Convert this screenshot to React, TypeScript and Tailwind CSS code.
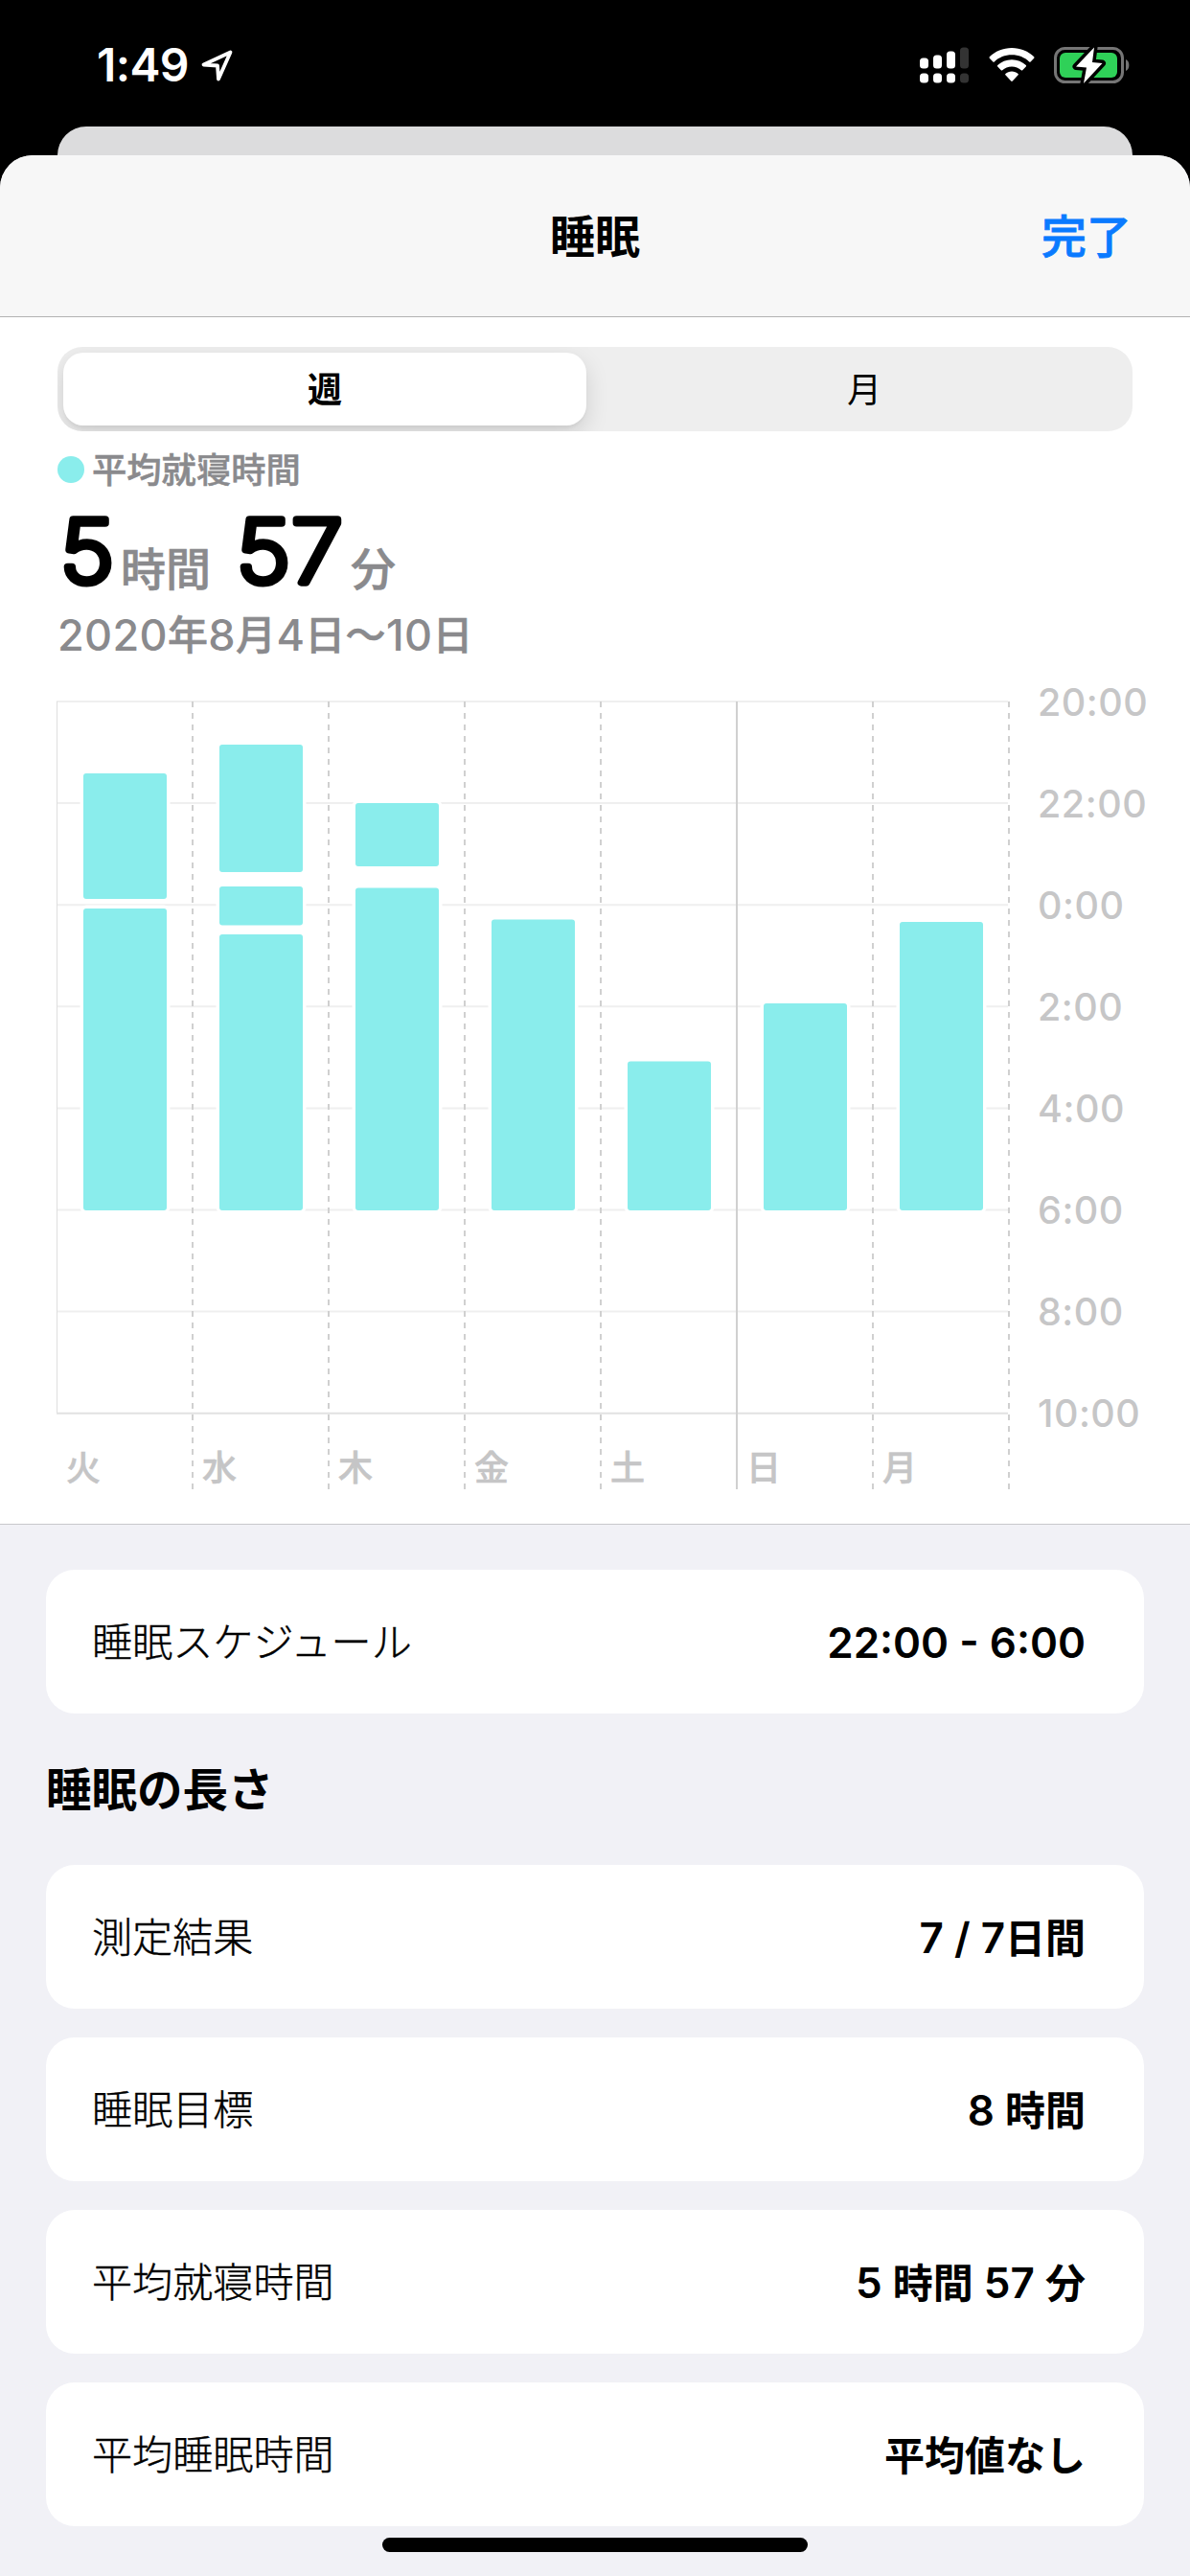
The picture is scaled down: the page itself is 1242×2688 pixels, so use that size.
import { useState } from 'react';
import clsx from 'clsx';

const HOURS = ['20:00', '22:00', '0:00', '2:00', '4:00', '6:00', '8:00', '10:00'];

interface DayColumn {
  label: string;
  bars: [number, number][];
}

// bar ranges are [top, bottom] in chart units
const DAYS: DayColumn[] = [
  { label: '火', bars: [[88, 219], [229, 544]] },
  { label: '水', bars: [[58, 191], [206, 246.5], [256, 544]] },
  { label: '木', bars: [[119, 185], [207.5, 544]] },
  { label: '金', bars: [[240.5, 544]] },
  { label: '土', bars: [[388.5, 544]] },
  { label: '日', bars: [[328, 544]] },
  { label: '月', bars: [[243, 544]] },
];

const LENGTH_ROWS = [
  { label: '測定結果', value: '7 / 7日間' },
  { label: '睡眠目標', value: '8 時間' },
  { label: '平均就寝時間', value: '5 時間 57 分' },
  { label: '平均睡眠時間', value: '平均値なし' },
];

const COL = 142;
const ROW = 106.1;

const LocationIcon = () => (
  <svg className="ml-3 h-9 w-9" viewBox="0 0 36 36" fill="none" stroke="#fff" strokeWidth="3.800" strokeLinejoin="round">
    <path d="M31.500 4.500 L3.500 17.500 L18 18.500 L19 32.500 Z" />
  </svg>
);

const SignalIcon = () => (
  <svg className="h-[38px] w-[52px]" viewBox="0 0 52 38" fill="#fff">
    <rect x="0" y="11.5" width="9" height="11" rx="3.5" />
    <rect x="14" y="8.5" width="9" height="14" rx="3.5" />
    <rect x="28" y="4.5" width="9" height="18" rx="3.5" />
    <rect x="42" y="0.5" width="9" height="22" rx="3.5" fill="#333" />
    <rect x="0" y="27.5" width="9" height="10" rx="3.5" />
    <rect x="14" y="27.5" width="9" height="10" rx="3.5" />
    <rect x="28" y="27.5" width="9" height="10" rx="3.5" />
    <rect x="42" y="27.5" width="9" height="10" rx="3.5" fill="#333" />
  </svg>
);

const WifiIcon = () => (
  <svg className="h-[38px] w-12" viewBox="0 0 48 38" fill="#fff">
    <path d="M24 1 C33 1 41.500 4.600 47.200 10.300 Q47.900 11 47.200 11.800 L43.600 15.400 Q42.900 16 42.200 15.400 C37.500 10.900 31 8.300 24 8.300 C17 8.300 10.500 10.900 5.800 15.400 Q5.100 16 4.400 15.400 L0.800 11.800 Q0.100 11 0.800 10.300 C6.500 4.600 15 1 24 1 Z" />
    <path d="M24 13.300 C29.800 13.300 35 15.500 38.800 19.100 Q39.500 19.900 38.800 20.600 L35.200 24.200 Q34.500 24.800 33.800 24.200 C31.200 21.900 27.800 20.500 24 20.500 C20.200 20.500 16.800 21.900 14.200 24.200 Q13.500 24.800 12.800 24.200 L9.200 20.600 Q8.500 19.900 9.200 19.100 C13 15.500 18.200 13.300 24 13.300 Z" />
    <path d="M24 25.500 C26.600 25.500 28.900 26.400 30.600 27.900 Q31.300 28.600 30.600 29.300 L24.800 35.600 Q24 36.300 23.200 35.600 L17.400 29.300 Q16.700 28.600 17.400 27.900 C19.100 26.400 21.400 25.500 24 25.500 Z" />
  </svg>
);

const BatteryIcon = () => (
  <svg className="h-10 w-20" viewBox="0 0 80 40">
    <rect x="1.500" y="2.500" width="70" height="35" rx="10" fill="none" stroke="#757575" strokeWidth="3" />
    <path d="M75 14 C79.500 15.500 79.500 24.500 75 26 Z" fill="#757575" />
    <rect x="6" y="7" width="60" height="26" rx="6" fill="#2fd158" />
    <path
      d="M42 1.500 L23 21.500 L34 22.500 L31 39 L50.500 18 L40 17 Z"
      fill="#fff"
      stroke="#000"
      strokeWidth="7"
      strokeLinejoin="round"
      paintOrder="stroke"
    />
  </svg>
);

const StatusBar = () => (
  <div className="flex h-[132px] items-start justify-between pl-[101px] pr-[62px] pt-[48px] text-white">
    <div className="flex h-10 items-center">
      <span className="text-[48px] font-semibold leading-10 tracking-[-0.6px]">1:49</span>
      <LocationIcon />
    </div>
    <div className="flex h-10 items-center">
      <SignalIcon />
      <div className="ml-5">
        <WifiIcon />
      </div>
      <div className="ml-5">
        <BatteryIcon />
      </div>
    </div>
  </div>
);

const SegmentedControl = () => {
  const [selected, setSelected] = useState('週');

  return (
    <div className="flex h-[88px] overflow-hidden rounded-[26px] bg-[#eeeeee] p-1.5 text-[36px]">
      {['週', '月'].map((item) => (
        <button
          key={item}
          onClick={() => setSelected(item)}
          className={clsx(
            'h-[76px] rounded-[21px] pt-0.5',
            selected === item
              ? 'w-[546px] bg-white font-semibold shadow-[0_9px_24px_rgba(0,0,0,0.13),0_3px_3px_rgba(0,0,0,0.04)]'
              : 'flex-1 pl-4'
          )}
        >
          {item}
        </button>
      ))}
    </div>
  );
};

const Summary = () => (
  <div className="text-[#8a8a8d]">
    <div className="mt-[18px] flex h-11 items-center">
      <span className="h-7 w-7 rounded-full bg-[#8aedec]" />
      <span className="ml-2 pt-0.5 text-[36.300px] font-medium leading-[44px] [-webkit-text-stroke:0.5px]">平均就寝時間</span>
    </div>
    <div className="mt-[17px] flex h-[106px] items-baseline">
      <BigNumber value="5" width={66} />
      <span className="text-[47px] font-medium [-webkit-text-stroke:0.6px]">時間</span>
      <span className="w-6" />
      <BigNumber value="57" width={122} />
      <span className="text-[47px] font-medium [-webkit-text-stroke:0.6px]">分</span>
    </div>
    <div className="mt-0.5 flex h-[52px] items-center whitespace-nowrap text-[45px] font-medium leading-[52px] tracking-[0.35px]">
      2020<Ja>年</Ja>8<Ja>月</Ja>4<Ja>日〜</Ja>10<Ja>日</Ja>
    </div>
  </div>
);

const Ja = ({ children }: { children: string }) => (
  <span className="text-[42px] [-webkit-text-stroke:0.6px]">{children}</span>
);

// thin digits with a round stroke give the soft terminals
const BigNumber = ({ value, width }: { value: string; width: number }) => (
  <svg width={width} height="82" className="shrink-0 overflow-visible" fill="#000" stroke="#000">
    <text
      x="2.500"
      y="79"
      transform="scale(1.07 1)"
      fontSize="91"
      fontWeight="200"
      strokeWidth="7.500"
      strokeLinejoin="round"
      letterSpacing="1"
    >
      {value}
    </text>
  </svg>
);

const SleepChart = () => (
  <svg className="-ml-px mt-[30px] block h-[840px] w-[1160px] overflow-visible" viewBox="0 0 1160 840">
    {HOURS.map((hour, i) => (
      <g key={hour}>
        <line x1="0" x2="993" y1={13 + i * ROW} y2={13 + i * ROW} stroke={i === 7 ? '#e2e2e2' : '#efefef'} strokeWidth="2" />
        <text x="1024" y={27.5 + i * ROW} fontSize="39.500" fontWeight="500" letterSpacing="0.500" fill="#c6c6c7">
          {hour}
        </text>
      </g>
    ))}
    <line x1="0.500" x2="0.500" y1="13" y2="755" stroke="#dedede" />
    {DAYS.map((day, i) => (
      <g key={day.label}>
        <line
          x1={(i + 1) * COL}
          x2={(i + 1) * COL}
          y1="13"
          y2="835"
          stroke="#d0d0d0"
          strokeWidth="2"
          strokeDasharray={i === 4 ? undefined : '6 6'}
        />
        {day.bars.map(([top, bottom]) => (
          <rect
            key={top}
            x={28 + i * COL}
            y={top}
            width="87"
            height={bottom - top}
            rx="3"
            fill="#8aedec"
            stroke="#fff"
            strokeWidth="7"
            paintOrder="stroke"
          />
        ))}
        <text x={10 + i * COL} y="826" fontSize="36" fontWeight="500" fill="#c5c5c6" stroke="#c5c5c6" strokeWidth="0.600">
          {day.label}
        </text>
      </g>
    ))}
  </svg>
);

const InfoCard = ({ label, value }: { label: string; value: string }) => (
  <div className="flex h-[150px] items-center justify-between rounded-[30px] bg-white pl-12 pr-[61px] pt-0.5">
    <span className="text-[42.100px] font-light [-webkit-text-stroke:0.4px]">{label}</span>
    <span className="text-[44px] font-semibold">
      {value.split(/([^\x00-\x7f]+)/).map((part, i) =>
        i % 2 ? (
          <span key={i} className="text-[42px]">
            {part}
          </span>
        ) : (
          part
        )
      )}
    </span>
  </div>
);

const App = () => (
  <div
    lang="ja"
    className="flex h-[2688px] w-[1242px] flex-col overflow-hidden bg-black font-['Inter','Noto_Sans_CJK_JP',sans-serif] text-black"
  >
    <StatusBar />
    <div className="mx-[60px] h-[30px] shrink-0 rounded-t-[30px] bg-[#dcdcdd]" />
    <div className="flex flex-1 flex-col overflow-hidden rounded-t-[34px] bg-[#f1f1f6]">
      <header className="grid h-[169px] shrink-0 grid-cols-3 items-center border-b border-[#b2b2b2] bg-[#f7f7f7] px-[61px] pt-0.5 text-[47px]">
        <span />
        <h1 className="text-center font-semibold">睡眠</h1>
        <button className="justify-self-end font-medium text-[#0a7aff] [-webkit-text-stroke:0.8px]">完了</button>
      </header>

      <section className="h-[1260px] shrink-0 border-b border-[#c8c8cc] bg-white px-[60px] pt-[31px]">
        <SegmentedControl />
        <Summary />
        <SleepChart />
      </section>

      <section className="flex flex-col px-12 pt-[47px]">
        <InfoCard label="睡眠スケジュール" value="22:00 - 6:00" />
        <h2 className="flex h-[158px] items-center pt-0.5 text-[47.500px] font-semibold">睡眠の長さ</h2>
        <div className="flex flex-col gap-[30px]">
          {LENGTH_ROWS.map((row) => (
            <InfoCard key={row.label} {...row} />
          ))}
        </div>
      </section>

      <div className="mt-3 h-[15px] w-[444px] shrink-0 self-center rounded-full bg-black" />
    </div>
  </div>
);

export default App;
